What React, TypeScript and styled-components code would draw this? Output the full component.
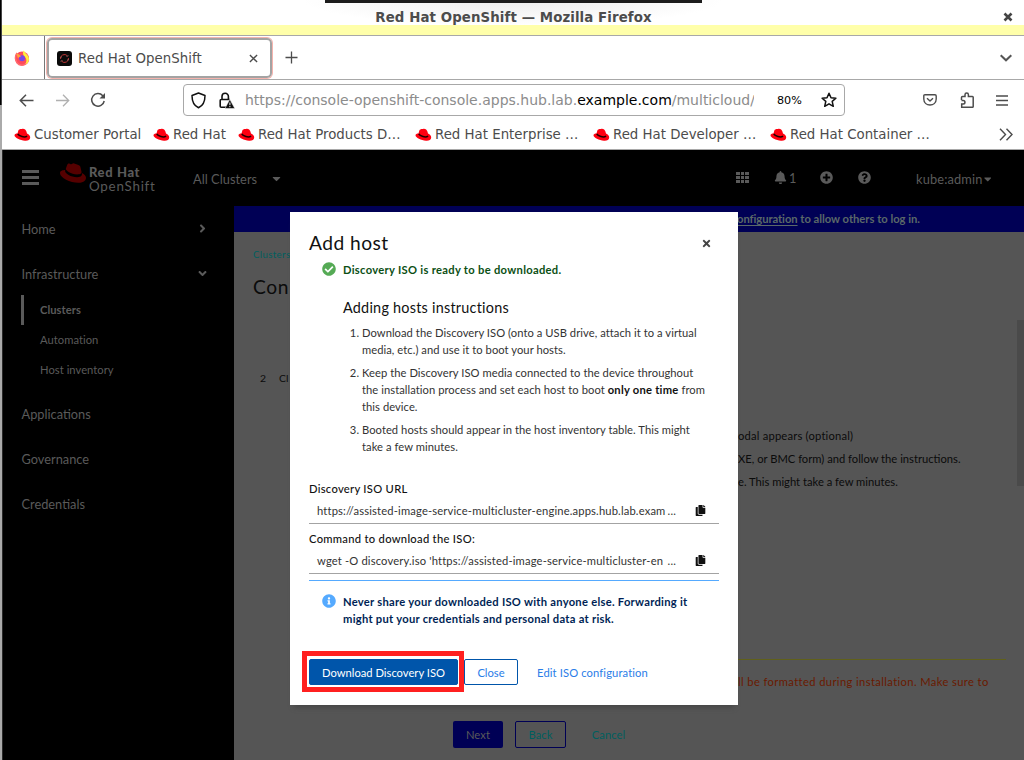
import React from 'react';
import styled, { createGlobalStyle } from 'styled-components';
import {
  FaRedhat, FaBell, FaPlusCircle, FaQuestionCircle, FaCaretDown, FaCopy,
  FaCheckCircle, FaInfoCircle, FaAngleRight, FaAngleDown, FaTimes,
} from 'react-icons/fa';

const chromeFont = '"DejaVu Sans", sans-serif';
const pageFont = 'Lato, "Open Sans", sans-serif';

const GlobalStyle = createGlobalStyle`
  * { box-sizing: border-box; }
  body { margin: 0; background: #fff; overflow: hidden; }
  button { font: inherit; letter-spacing: inherit; }
`;

const Desktop = styled.div`
  position: relative;
  display: flex;
  width: 1024px;
  height: 760px;
  overflow: hidden;
  background: #fff;
  font-family: ${chromeFont};
`;

const DesktopEdge = styled.div`
  flex: none;
  width: 2px;
  background: linear-gradient(90deg, #000 50%, #444 50%) 0 0 / 2px 105px no-repeat, #aaa;
`;

const Window = styled.div`
  flex: 1;
  min-width: 0;
  display: flex;
  flex-direction: column;
`;

const TopPanel = styled.div`
  position: absolute;
  left: 325px;
  top: 0;
  width: 377px;
  height: 3px;
  background: #1c1c1c;
`;

const TitleBar = styled.div`
  flex: none;
  height: 36px;
  display: flex;
  align-items: flex-start;
  padding: 9px 11px 0 0;
  border-bottom: 1px solid #a8a8a8;
  background:
    linear-gradient(#ffffaa, #ffffaa) 0 25px / 100% 10px no-repeat,
    radial-gradient(ellipse 210px 26px at 511px 0, #ececec, #fff);
`;

const WindowTitle = styled.div`
  flex: 1;
  padding-left: 22px;
  text-align: center;
  font-weight: 700;
  font-size: 13.33px;
  letter-spacing: 0.1px;
  line-height: 18px;
  color: #4c4c4c;
`;

const WindowClose = styled.svg`
  width: 10px;
  height: 10px;
  margin-top: 3px;
`;

const TabStrip = styled.div`
  flex: none;
  height: 44px;
  display: flex;
  align-items: center;
  border-bottom: 1px solid #a8a8a8;
`;

const PinnedTab = styled.div`
  align-self: stretch;
  width: 43px;
  display: flex;
  align-items: center;
  padding-left: 12px;
  border-right: 1px solid #777;
`;

const ActiveTab = styled.div`
  width: 225px;
  height: 40px;
  margin: 1px 13px 0 2px;
  padding: 0 12px 0 8px;
  display: flex;
  align-items: center;
  gap: 6px;
  border: 2px solid #a3a3a3;
  border-radius: 5px;
  box-shadow: 0 0 0 1px #f5b3ad;
  font-size: 13.33px;
  letter-spacing: 0.04px;
  color: #4c4c4c;
  span { flex: 1; white-space: nowrap; }
`;

const Push = styled.div`
  flex: 1;
`;

const Icon = styled.svg.attrs<{ $w: number; $h?: number }>((p) => ({
  fill: 'none',
  stroke: p.stroke ?? 'currentColor',
}))<{ $w: number; $h?: number }>`
  flex: none;
  display: block;
  width: ${(p) => p.$w}px;
  height: ${(p) => p.$h ?? p.$w}px;
`;

const LockIcon = styled(Icon)`
  margin-left: 12px;
`;

const TabMenu = styled.div`
  padding-right: 12px;
  color: #555;
`;

const NavBar = styled.div`
  flex: none;
  height: 40px;
  display: flex;
  align-items: center;
  padding: 0 16px 0 17px;
  color: #4c4c4c;
`;

const NavButtons = styled.div`
  width: 164px;
  display: flex;
  align-items: center;
  gap: 20.500px;
`;

const UrlBox = styled.div`
  width: 662px;
  height: 32px;
  display: flex;
  align-items: center;
  padding: 0 7px 0 7px;
  border: 1px solid #a8a8a8;
  border-radius: 4px;
  color: #111;
`;

const LockGap = styled.div`
  width: 1px;
`;

const Url = styled.div`
  width: 509px;
  margin-left: 10px;
  overflow: hidden;
  white-space: nowrap;
  font-size: 14px;
  color: #8c8c8c;
  b { font-weight: 400; color: #000; }
`;

const Zoom = styled.div`
  flex: 1;
  padding-left: 23px;
  font-size: 11.2px;
  color: #000;
`;

const ToolIcons = styled.div`
  flex: 1;
  display: flex;
  align-items: center;
  justify-content: flex-end;
  gap: 22.500px;
`;

const BookmarkBar = styled.div`
  flex: none;
  height: 30px;
  display: flex;
  align-items: center;
  padding: 0 11px 0 12px;
  border-bottom: 1px solid #a8a8a8;
`;

const Bookmark = styled.div<{ $w: number }>`
  width: ${(p) => p.$w}px;
  display: flex;
  align-items: center;
  gap: 3px;
  font-size: 13.33px;
  white-space: nowrap;
  color: #4c4c4c;
`;

const Console = styled.div`
  position: relative;
  flex: 1;
  min-height: 0;
  display: flex;
  flex-direction: column;
  border-left: 1px solid #2a2a2a;
  background: #000;
  font-family: ${pageFont};
  font-size: 12.8px;
  color: #5a5a5a;
`;

const Masthead = styled.div`
  flex: none;
  height: 56px;
  display: flex;
  align-items: center;
  padding: 0 33px 2px 19px;
`;

const Logo = styled.div`
  display: flex;
  align-items: flex-start;
  gap: 3px;
  width: 133px;
  margin: 4px 0 0 21px;
  svg { color: #550000; margin-top: -5px; }
`;

const LogoText = styled.div`
  display: flex;
  flex-direction: column;
  font-size: 13.4px;
  line-height: 15px;
  letter-spacing: 0.75px;
  b { font-size: 13px; font-weight: 900; line-height: 14px; letter-spacing: 0.6px; }
`;

const Perspective = styled.div`
  display: flex;
  align-items: center;
  gap: 13px;
  padding-top: 3px;
  letter-spacing: 0.04px;
`;

const HeadTools = styled.div`
  flex: 1;
  display: flex;
  align-items: center;
  justify-content: flex-end;
  padding-top: 1px;
`;

const HeadTool = styled.div<{ $w: number }>`
  width: ${(p) => p.$w}px;
  display: flex;
  align-items: center;
  gap: 2px;
`;

const UserMenu = styled(HeadTool)`
  padding-top: 2px;
  gap: 1px;
  letter-spacing: 0.15px;
`;

const Columns = styled.div`
  flex: 1;
  min-height: 0;
  display: flex;
`;

const Sidebar = styled.div`
  flex: none;
  width: 231px;
  padding: 0 25px 0 18px;
  display: flex;
  flex-direction: column;
`;

const NavItem = styled.div`
  height: 45px;
  padding-left: 0.5px;
  display: flex;
  align-items: center;
  justify-content: space-between;
`;

const SubNav = styled.div`
  margin: -1px 0 6px;
  font-size: 11.2px;
`;

const SubItem = styled.div<{ $current?: boolean }>`
  height: 30px;
  padding-left: 16px;
  border-left: 3px solid ${(p) => (p.$current ? '#5a5a5a' : 'transparent')};
  font-weight: ${(p) => (p.$current ? 700 : 400)};
  line-height: 29px;
  letter-spacing: 0.04px;
`;

const Main = styled.div`
  flex: 1;
  min-width: 0;
  display: flex;
  flex-direction: column;
  background: #555;
`;

const Banner = styled.div`
  flex: none;
  height: 26px;
  padding-right: 104px;
  text-align: right;
  line-height: 26px;
  font-size: 11.2px;
  font-weight: 700;
  background: #000055;
  color: #5b6868;
  u { text-underline-offset: 2px; letter-spacing: -0.05px; }
`;

const Body = styled.div`
  flex: 1;
  display: grid;
  grid-template-columns: 504px 1fr 7px;
  color: #0b0b0b;
`;

const BodyLeft = styled.div`
  padding: 15px 0 0 19px;
`;

const Crumb = styled.div`
  height: 16px;
  font-size: 9.6px;
  line-height: 16px;
  letter-spacing: 0.4px;
  color: #005f5f;
`;

const PageTitle = styled.div`
  margin-top: 12px;
  font-size: 19.2px;
  line-height: 24px;
  letter-spacing: 0.6px;
`;

const WizardStep = styled.div`
  display: flex;
  gap: 13px;
  padding: 71px 0 0 7px;
  font-size: 10.4px;
  line-height: 16px;
`;

const BodyRight = styled.div`
  display: flex;
  flex-direction: column;
  padding: 192px 11px 0 0;
  font-size: 11.2px;
  line-height: 23px;
  white-space: nowrap;
`;

const FirstLine = styled.div`
  letter-spacing: 0.2px;
`;

const Warning = styled.div`
  margin-top: 166px;
  padding-top: 10px;
  border-top: 1px solid #60601a;
  letter-spacing: 0.38px;
  color: #6a1a00;
`;

const ScrollThumb = styled.div`
  height: 166px;
  margin-top: 88px;
  background: #4a4a4a;
`;

const Footer = styled.div`
  flex: none;
  height: 39px;
  display: flex;
  align-items: flex-start;
  padding-left: 219px;
  font-size: 11.2px;
`;

const FooterButton = styled.button<{ $kind: 'primary' | 'outline' | 'plain'; $w: number }>`
  width: ${(p) => p.$w}px;
  height: 27px;
  padding: 0;
  margin-right: 12px;
  border-radius: 2px;
  letter-spacing: 0.1px;
  border: 1px solid ${(p) => (p.$kind === 'outline' ? '#000055' : 'transparent')};
  background: ${(p) => (p.$kind === 'primary' ? '#000055' : 'transparent')};
  color: ${(p) => (p.$kind === 'primary' ? '#5a5a5a' : '#005f5f')};
`;

const Modal = styled.div`
  position: absolute;
  left: 287px;
  top: 62px;
  width: 448px;
  height: 493px;
  padding: 19px 19px 0;
  background: #fff;
  box-shadow: 0 6px 5px -4px #444;
  font-size: 11.2px;
  line-height: 17px;
  letter-spacing: 0.06px;
  color: #333;
`;

const ModalHead = styled.div`
  height: 25px;
  margin-bottom: 5px;
  display: flex;
  align-items: center;
  justify-content: space-between;
  padding-right: 7px;
  font-size: 19.2px;
  letter-spacing: 0.45px;
  color: #111;
  span { margin-top: -3px; }
`;

const AlertRow = styled.div<{ $tone: 'success' | 'info' }>`
  display: flex;
  gap: 7px;
  padding-left: 13px;
  font-weight: 700;
  letter-spacing: ${(p) => (p.$tone === 'success' ? 0.3 : 0.27)}px;
  color: ${(p) => (p.$tone === 'success' ? '#0b4f14' : '#001f55')};
  svg { flex: none; margin-top: 1px; color: ${(p) => (p.$tone === 'success' ? '#55aa55' : '#55aaff')}; }
`;

const Instructions = styled.div`
  padding: 19px 0 0 34px;
`;

const InstructionsTitle = styled.div`
  margin-bottom: 5px;
  font-size: 14.4px;
  line-height: 22px;
  letter-spacing: 0.24px;
  color: #111;
`;

const Steps = styled.ol`
  margin: 0;
  padding: 0 0 0 19px;
`;

const Step = styled.li`
  margin-bottom: 6px;
  white-space: nowrap;
  letter-spacing: 0.05px;
  b { color: #111; letter-spacing: 0.25px; }
`;

const Fields = styled.div`
  margin-top: 25px;
`;

const FieldLabel = styled.div`
  height: 17px;
  font-weight: 500;
  letter-spacing: 0.29px;
  color: #111;
`;

const CopyField = styled.div`
  height: 27px;
  margin-bottom: 6px;
  padding: 1px 13px 0 8px;
  display: flex;
  align-items: center;
  justify-content: space-between;
  border-bottom: 1px solid #a3a3a3;
  white-space: nowrap;
  letter-spacing: 0.16px;
  svg { color: #111; }
`;

const CopyValue = styled.span`
  width: 359px;
  display: flex;
  justify-content: space-between;
`;

const InfoAlert = styled.div`
  padding-top: 12px;
  border-top: 1px solid #55aaff;
`;

const Actions = styled.div`
  display: flex;
  align-items: flex-start;
  margin: 24px 0 0 -7px;
`;

const Highlight = styled.div`
  padding: 3px 0 0 2px;
  border: 5px solid #ff2020;
  height: 41px;
  width: 162px;
`;

const ActionButton = styled.button<{ $kind: 'primary' | 'outline' | 'link'; $w: number }>`
  display: block;
  width: ${(p) => p.$w}px;
  height: 26px;
  margin-top: ${(p) => (p.$kind === 'primary' ? 0 : 8)}px;
  padding: 0;
  border-radius: 2px;
  border: 1px solid ${(p) => (p.$kind === 'link' ? 'transparent' : '#0055aa')};
  background: ${(p) => (p.$kind === 'primary' ? '#0055aa' : 'transparent')};
  color: ${(p) => (p.$kind === 'primary' ? '#fff' : '#2a7de8')};
  letter-spacing: ${(p) => (p.$kind === 'link' ? 0.12 : 0)}px;
  line-height: 17px;
  white-space: nowrap;
`;

const Hat = () => (
  <Icon $w={17} $h={14} viewBox="0 0 17 14" stroke="none">
    <path d="M4.200 3C4.800.700 6.800 1 8 .900c2.400-.4 4.200.700 5 4.700 2 .9 3.300 2.400 3.200 3.900-.1 2.300-2.400 3.600-5.200 3.300C6.200 12.400.5 9.800.5 7.300c0-1.200 1.300-1.700 3-1.700Z" fill="#ff0010" />
    <path d="M3.700 5.900c1.300 2.400 6.800 4 9.400 2.200" stroke="#200" strokeWidth="1.500" />
  </Icon>
);

const Firefox = () => (
  <Icon $w={16} viewBox="0 0 16 16">
    <circle cx="8" cy="8.500" r="7" fill="#ff4b5b" stroke="none" />
    <path d="M3 3C.500 6.500 1 12 5 14.500c4 2 9-.5 9.500-5" stroke="#ff6a6f" strokeWidth="1.500" />
    <path d="M9.500.500c1.200 1 1.400 2 2.500 3.200 2.500 2 4 5 2.200 8.300-.7 1.500-2 2-3 2.300 2-3 1.500-6-1-8C9 5 8.600 2.500 9.500.500Z" fill="#ffee3d" stroke="none" />
    <circle cx="8" cy="8.300" r="3" fill="#7548e8" stroke="none" />
    <path d="M2.300 3.500c1.500.4 3 1 4.700 2.700-1 .6-2.200.7-3 2.300" fill="#ffa43a" stroke="none" />
  </Icon>
);

const bookmarks: [string, number][] = [
  ['Customer Portal', 139],
  ['Red Hat', 85],
  ['Red Hat Products D…', 177],
  ['Red Hat Enterprise …', 178],
  ['Red Hat Developer …', 177],
  ['Red Hat Container …', 180],
];

export default function App() {
  return (
    <Desktop>
      <GlobalStyle />
      <DesktopEdge />
      <Window>
        <TitleBar>
          <WindowTitle>Red Hat OpenShift — Mozilla Firefox</WindowTitle>
          <WindowClose viewBox="0 0 10 10"><path d="M1.500 1.500l7 7M8.500 1.500l-7 7" stroke="#444" strokeWidth="2.600" /></WindowClose>
        </TitleBar>
        <TabStrip>
          <PinnedTab><Firefox /></PinnedTab>
          <ActiveTab>
            <Icon $w={15} viewBox="0 0 15 15">
              <rect width="15" height="15" rx="3" fill="#0a0a0a" stroke="none" />
              <path d="M3.500 8a4 4 0 0 1 6.800-3.300M11.500 7a4 4 0 0 1-6.800 3.300" stroke="#b33" />
              <path d="M3 6.500l2-.8M10 9.300l2-.8M9.500 5.500l2-.8M3.500 10.300l2-.8" stroke="#a66" strokeWidth=".8" />
            </Icon>
            <span>Red Hat OpenShift</span>
            <Icon $w={9} viewBox="0 0 10 10" strokeWidth="1.500"><path d="M1 1l8 8M9 1L1 9" /></Icon>
          </ActiveTab>
          <Icon $w={13} viewBox="0 0 13 13" stroke="#4c4c4c" strokeWidth="1.300"><path d="M6.500.500v12M.500 6.500h12" /></Icon>
          <Push />
          <TabMenu><Icon $w={12} $h={8} viewBox="0 0 12 8" strokeWidth="2"><path d="M.700 1.200L6 6.300l5.300-5.100" /></Icon></TabMenu>
        </TabStrip>
        <NavBar>
          <NavButtons>
            <Icon $w={15} viewBox="0 0 15 15" strokeWidth="1.500"><path d="M14.500 7.500H1.500M7 1.800L1.300 7.500 7 13.200" /></Icon>
            <Icon $w={15} viewBox="0 0 15 15" stroke="#b0b0b0" strokeWidth="1.300"><path d="M1 7.500h12.500M8 1.800l5.700 5.700L8 13.200" /></Icon>
            <Icon $w={16} viewBox="0 0 16 16" strokeWidth="1.500"><path d="M14.200 9A6.300 6.300 0 1 1 12.800 3.800L14 5" /><path d="M15 1v5.500H9.500Z" fill="currentColor" stroke="none" /></Icon>
          </NavButtons>
          <UrlBox>
            <Icon $w={15} $h={17} viewBox="0 0 15 17" strokeWidth="1.500"><path d="M7.500 1L14 3.500c0 6-1.500 10-6.500 12.300C2.500 13.500 1 9.500 1 3.500Z" strokeLinejoin="round" /></Icon>
            <LockGap />
            <LockIcon $w={16} $h={17} viewBox="0 0 16 17" strokeWidth="1.600">
              <path d="M8 15.200H2.200q-1 0-1-1V8.500q0-1 1-1h8.600M3 7.500V4.500a3.200 3.200 0 0 1 6.400 0v3" />
              <path d="M10.800 7.300l5 9.200H6Z" fill="#111" stroke="#fff" strokeWidth=".5" />
              <path d="M10.900 10.500v2.700M10.900 14v1.200" stroke="#fff" strokeWidth="1" />
            </LockIcon>
            <Url>https://console-openshift-console.apps.hub.lab.<b>example.com</b>/multicloud/</Url>
            <Zoom>80%</Zoom>
            <Icon $w={16} viewBox="0 0 16 16" strokeWidth="1.500"><path d="M8 1.200l2 4.500 4.900.5-3.700 3.200 1.100 4.900L8 11.800l-4.300 2.500 1.100-4.900L1.100 6.200 6 5.700Z" strokeLinejoin="round" /></Icon>
          </UrlBox>
          <ToolIcons>
            <Icon $w={14} $h={12} viewBox="0 0 14 12" strokeWidth="1.400"><path d="M2 .800h10q1.200 0 1.200 1.200v3c0 8-12.400 8-12.400 0V2Q.800.800 2 .800ZM4 4.300l3 2.800 3-2.800" strokeLinejoin="round" /></Icon>
            <Icon $w={14} $h={16} viewBox="0 0 14 16" strokeWidth="1.500"><path d="M1.500 8V5.500q0-1 1-1H5V2.700a1.700 1.700 0 0 1 3.400 0v1.800h4q.8 0 .8.800v9.200q0 .8-.8.800H1.700v-3.300h1.500a1.700 1.700 0 0 0 0-3.500H1.500" /></Icon>
            <Icon $w={12} $h={11} viewBox="0 0 12 11" strokeWidth="1.300"><path d="M0 1h12M0 5.500h12M0 10h12" /></Icon>
          </ToolIcons>
        </NavBar>
        <BookmarkBar>
          {bookmarks.map(([name, w]) => <Bookmark key={name} $w={w}><Hat />{name}</Bookmark>)}
          <Push />
          <Icon $w={14} $h={13} viewBox="0 0 14 13" stroke="#4c4c4c" strokeWidth="1.400"><path d="M1 .700l5.500 5.800L1 12.300M7.500.700L13 6.500l-5.500 5.800" /></Icon>
        </BookmarkBar>
        <Console>
          <Masthead>
            <Icon $w={17} $h={15} viewBox="0 0 17 15" strokeWidth="3"><path d="M0 1.500h17M0 7.500h17M0 13.500h17" /></Icon>
            <Logo>
              <FaRedhat size={26} />
              <LogoText><b>Red Hat</b><span>OpenShift</span></LogoText>
            </Logo>
            <Perspective>All Clusters <FaCaretDown size={13} /></Perspective>
            <HeadTools>
              <HeadTool $w={38}>
                <Icon $w={13} $h={11} viewBox="0 0 13 11" stroke="none">
                  <path d="M0 0h4v3H0zM5 0h3v3H5zM9 0h4v3H9zM0 4h4v3H0zM5 4h3v3H5zM9 4h4v3H9zM0 8h4v3H0zM5 8h3v3H5zM9 8h4v3H9z" fill="currentColor" />
                </Icon>
              </HeadTool>
              <HeadTool $w={46}><FaBell size={13} />1</HeadTool>
              <HeadTool $w={38}><FaPlusCircle size={13} /></HeadTool>
              <HeadTool $w={58}><FaQuestionCircle size={13} /></HeadTool>
              <UserMenu $w={75}>kube:admin<FaCaretDown size={12} /></UserMenu>
            </HeadTools>
          </Masthead>
          <Columns>
            <Sidebar>
              <NavItem>Home<FaAngleRight size={13} /></NavItem>
              <NavItem>Infrastructure<FaAngleDown size={13} /></NavItem>
              <SubNav>
                <SubItem $current>Clusters</SubItem>
                <SubItem>Automation</SubItem>
                <SubItem>Host inventory</SubItem>
              </SubNav>
              <NavItem>Applications</NavItem>
              <NavItem>Governance</NavItem>
              <NavItem>Credentials</NavItem>
            </Sidebar>
            <Main>
              <Banner><u>configuration</u> to allow others to log in.</Banner>
              <Body>
                <BodyLeft>
                  <Crumb>Clusters</Crumb>
                  <PageTitle>Con</PageTitle>
                  <WizardStep><span>2</span><span>Cl</span></WizardStep>
                </BodyLeft>
                <BodyRight>
                  <FirstLine>odal appears (optional)</FirstLine>
                  <div>XE, or BMC form) and follow the instructions.</div>
                  <div>e. This might take a few minutes.</div>
                  <Warning>ll be formatted during installation. Make sure to</Warning>
                </BodyRight>
                <ScrollThumb />
              </Body>
              <Footer>
                <FooterButton $kind="primary" $w={50}>Next</FooterButton>
                <FooterButton $kind="outline" $w={51}>Back</FooterButton>
                <FooterButton $kind="plain" $w={61}>Cancel</FooterButton>
              </Footer>
            </Main>
          </Columns>
          <Modal>
            <ModalHead><span>Add host</span><FaTimes size={11} color="#444" /></ModalHead>
            <AlertRow $tone="success"><FaCheckCircle size={14} />Discovery ISO is ready to be downloaded.</AlertRow>
            <Instructions>
              <InstructionsTitle>Adding hosts instructions</InstructionsTitle>
              <Steps>
                <Step>Download the Discovery ISO (onto a USB drive, attach it to a virtual<br />media, etc.) and use it to boot your hosts.</Step>
                <Step>Keep the Discovery ISO media connected to the device throughout<br />the installation process and set each host to boot <b>only one time</b> from<br />this device.</Step>
                <Step>Booted hosts should appear in the host inventory table. This might<br />take a few minutes.</Step>
              </Steps>
            </Instructions>
            <Fields>
              <FieldLabel>Discovery ISO URL</FieldLabel>
              <CopyField><CopyValue><span>https://assisted-image-service-multicluster-engine.apps.hub.lab.exam</span><span>...</span></CopyValue><FaCopy size={11} /></CopyField>
              <FieldLabel>Command to download the ISO:</FieldLabel>
              <CopyField><CopyValue><span>wget -O discovery.iso 'https://assisted-image-service-multicluster-en</span><span>...</span></CopyValue><FaCopy size={11} /></CopyField>
            </Fields>
            <InfoAlert>
              <AlertRow $tone="info"><FaInfoCircle size={14} /><div>Never share your downloaded ISO with anyone else. Forwarding it<br />might put your credentials and personal data at risk.</div></AlertRow>
            </InfoAlert>
            <Actions>
              <Highlight><ActionButton $kind="primary" $w={149}>Download Discovery ISO</ActionButton></Highlight>
              <ActionButton $kind="outline" $w={54}>Close</ActionButton>
              <ActionButton $kind="link" $w={149}>Edit ISO configuration</ActionButton>
            </Actions>
          </Modal>
        </Console>
      </Window>
      <TopPanel />
    </Desktop>
  );
}
